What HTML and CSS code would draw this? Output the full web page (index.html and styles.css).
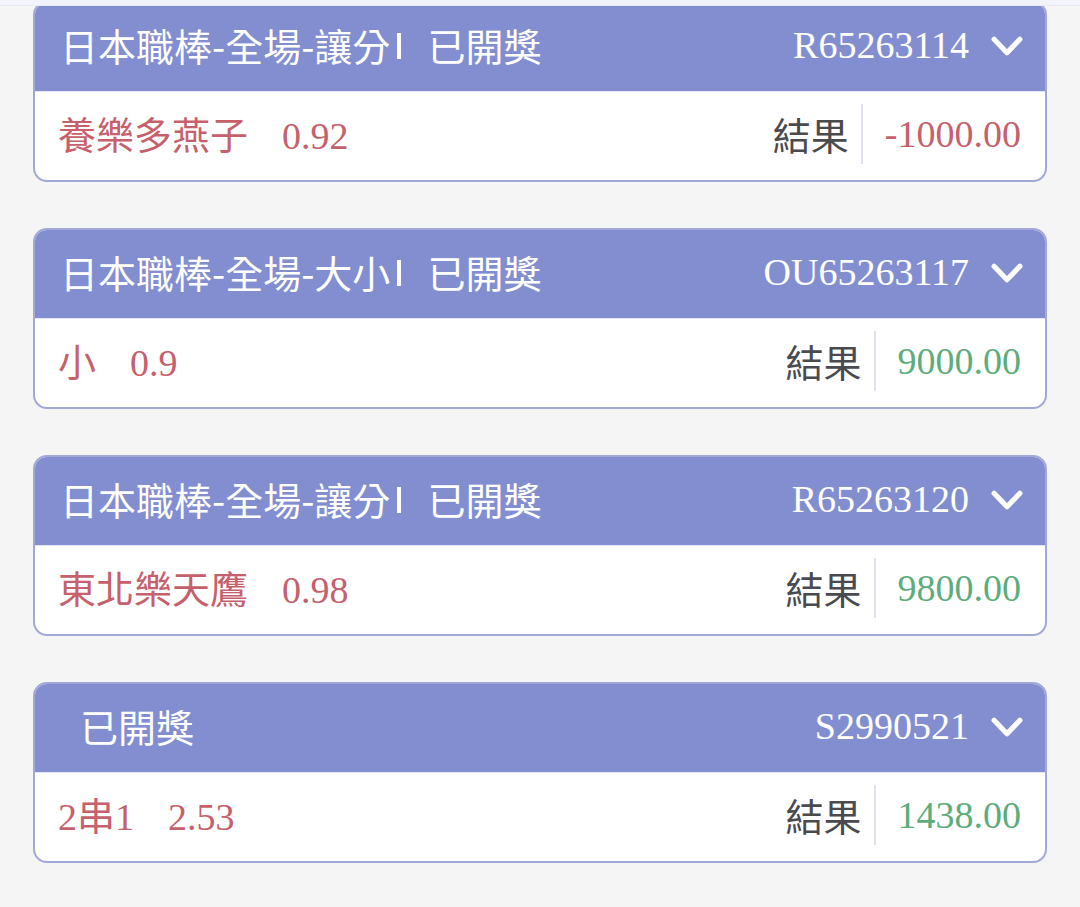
FILE: index.html
```html
<html>
<head>
	<meta charset="utf-8">
	<link rel="stylesheet" href="styles.css">
</head>
<body>
	<div class="topbar"></div>
	<ul class="list">
		<li class="card">
			<div class="card-head">
				<p class="title">日本職棒-全場-讓分<span class="bar"></span>已開獎</p>
				<span class="code">R65263114</span>
				<svg class="arrow" viewBox="0 0 31 20"><polyline points="3,3 15.5,16 28,3" /></svg>
			</div>
			<div class="card-body">
				<p class="pick">養樂多燕子<span class="odds">0.92</span></p>
				<span class="label">結果</span>
				<span class="amount lose">-1000.00</span>
			</div>
		</li>
		<li class="card">
			<div class="card-head">
				<p class="title">日本職棒-全場-大小<span class="bar"></span>已開獎</p>
				<span class="code">OU65263117</span>
				<svg class="arrow" viewBox="0 0 31 20"><polyline points="3,3 15.5,16 28,3" /></svg>
			</div>
			<div class="card-body">
				<p class="pick">小<span class="odds">0.9</span></p>
				<span class="label">結果</span>
				<span class="amount win">9000.00</span>
			</div>
		</li>
		<li class="card">
			<div class="card-head">
				<p class="title">日本職棒-全場-讓分<span class="bar"></span>已開獎</p>
				<span class="code">R65263120</span>
				<svg class="arrow" viewBox="0 0 31 20"><polyline points="3,3 15.5,16 28,3" /></svg>
			</div>
			<div class="card-body">
				<p class="pick">東北樂天鷹<span class="odds">0.98</span></p>
				<span class="label">結果</span>
				<span class="amount win">9800.00</span>
			</div>
		</li>
		<li class="card">
			<div class="card-head">
				<p class="title only">已開獎</p>
				<span class="code">S2990521</span>
				<svg class="arrow" viewBox="0 0 31 20"><polyline points="3,3 15.5,16 28,3" /></svg>
			</div>
			<div class="card-body">
				<p class="pick"><span class="num">2</span>串<span class="num">1</span><span class="odds">2.53</span></p>
				<span class="label">結果</span>
				<span class="amount win">1438.00</span>
			</div>
		</li>
	</ul>
</body>
</html>
```

FILE: styles.css
```css
body {margin:0;padding-top:1px;background:#f5f5f6;font-family:"Noto Sans CJK TC","Noto Sans",sans-serif;}
p,ul {margin:0;padding:0;}
li {list-style:none;}

.topbar {position:fixed;top:0;left:0;right:0;height:5px;background:#f2f3fb;border-bottom:1px solid #e9eaf3;z-index:2;}

.list {display:flex;flex-direction:column;gap:46px;padding:0 33px;}
.card {border:2px solid #a2a8d6;border-radius:14px;overflow:hidden;background:#fff;}

.card-head {height:89px;box-sizing:border-box;background:#838ed1;color:#fff;display:flex;align-items:center;padding:0 22px 4px 25px;border-bottom:1px solid #e4e6f4;}
.title {flex:1;font-size:38px;line-height:38px;white-space:nowrap;}
.title.only {padding-left:20px;}
.bar {display:inline-block;width:4px;height:26px;background:#fff;margin:0 26px 0 7px;vertical-align:2px;}
.code {font-family:"Liberation Serif",serif;font-size:38px;line-height:1;margin-right:22px;}
.arrow {width:32px;height:21px;fill:none;stroke:#fff;stroke-width:5;stroke-linecap:round;stroke-linejoin:round;margin-top:2px;}

.card-body {height:88px;box-sizing:border-box;display:flex;align-items:center;padding:0 24px 4px 23px;}
.pick {flex:1;font-size:38px;line-height:1;color:#c6606c;}
.num {font-family:"Liberation Serif",serif;}
.odds {font-family:"Liberation Serif",serif;margin-left:34px;}
.label {font-size:38px;line-height:1;color:#4a4a4f;padding-right:12px;border-right:2px solid #dfe1f1;height:60px;display:flex;align-items:center;}
.amount {font-family:"Liberation Serif",serif;font-size:38px;line-height:1;padding-left:22px;}
.lose {color:#c6606c;}
.win {color:#5dad7c;}
```
